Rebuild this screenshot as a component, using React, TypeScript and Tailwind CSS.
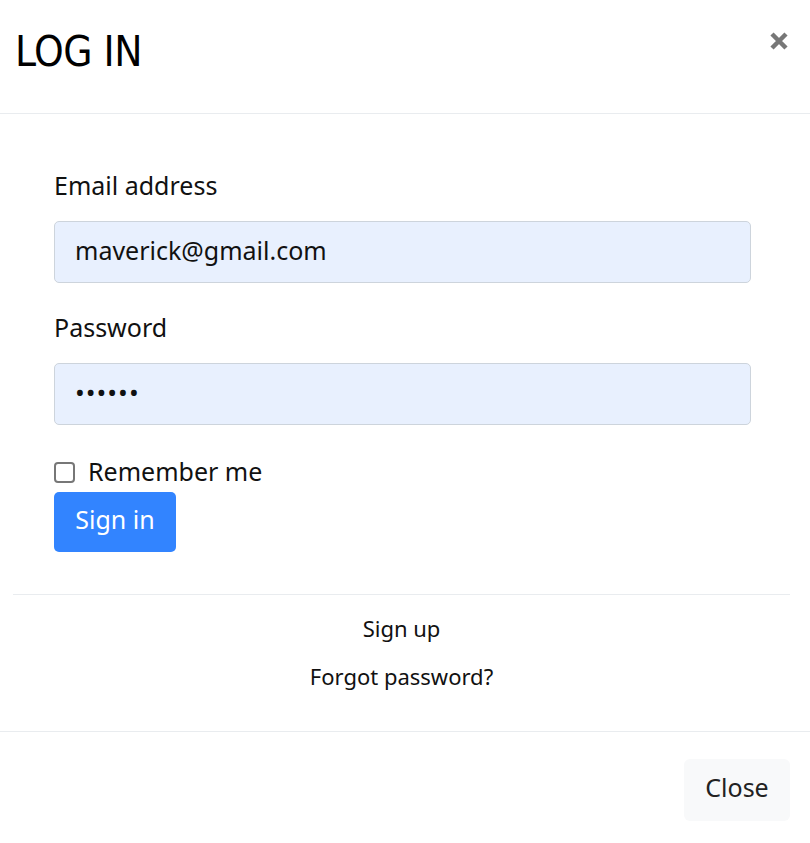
export default function App() {
  return (
    <div className="min-h-screen w-[810px] bg-white text-[#111] font-['Noto_Sans',sans-serif]">
      {/* header */}
      <div className="flex h-[114px] items-start justify-between border-b border-[#e9ecef] pl-[15px] pr-[20px]">
        <h1 className="mt-[28px] text-[42px] leading-[48px] tracking-[-0.5px] font-['Liberation_Sans_Narrow','DejaVu_Sans_Condensed',sans-serif] text-black">
          LOG IN
        </h1>
        <button className="mt-[30px] text-[#777]">
          <svg width="22" height="22" viewBox="0 0 22 22">
            <path d="M4 4 L18 18 M18 4 L4 18" stroke="currentColor" strokeWidth="4.5" strokeLinecap="butt" />
          </svg>
        </button>
      </div>

      {/* body */}
      <div className="px-[54px]">
        <div className="w-[697px] pt-[54px]">
          <label className="block text-[25px] leading-[34px]">Email address</label>
          <div className="mt-[19px] flex h-[62px] items-center rounded-[5px] border border-[#cdd4dc] bg-[#e8f0fe] px-[20px] pb-[3px] text-[25px]">
            maverick@gmail.com
          </div>
          <label className="mt-[27px] block text-[25px] leading-[34px]">Password</label>
          <div className="mt-[19px] flex h-[62px] items-center rounded-[5px] border border-[#cdd4dc] bg-[#e8f0fe] px-[20px] pb-[3px] text-[26px] tracking-[1px]">
            ••••••
          </div>
          <div className="mt-[31px] flex items-center gap-[13px]">
            <span className="h-[21px] w-[21px] rounded-[4px] border-2 border-[#777] bg-white" />
            <span className="pb-[2px] text-[25px] leading-[30px]">Remember me</span>
          </div>
          <button className="mt-[4px] flex h-[60px] w-[122px] items-center justify-center rounded-[5px] bg-[#3284ff] pb-[4px] text-[25px] text-white">
            Sign in
          </button>
        </div>
      </div>

      {/* links */}
      <div className="ml-[13px] mr-[20px] mt-[42px] border-t border-[#e9ecef] pt-[18px] text-center text-[22px] leading-[30px]">
        <div>Sign up</div>
        <div className="mt-[18px]">Forgot password?</div>
      </div>

      {/* footer */}
      <div className="mt-[40px] flex justify-end border-t border-[#e9ecef] pr-[20px] pt-[27px]">
        <button className="flex h-[62px] w-[106px] items-center justify-center rounded-[6px] bg-[#f8f9fa] pb-[4px] text-[25px] text-[#222]">
          Close
        </button>
      </div>
    </div>
  );
}
